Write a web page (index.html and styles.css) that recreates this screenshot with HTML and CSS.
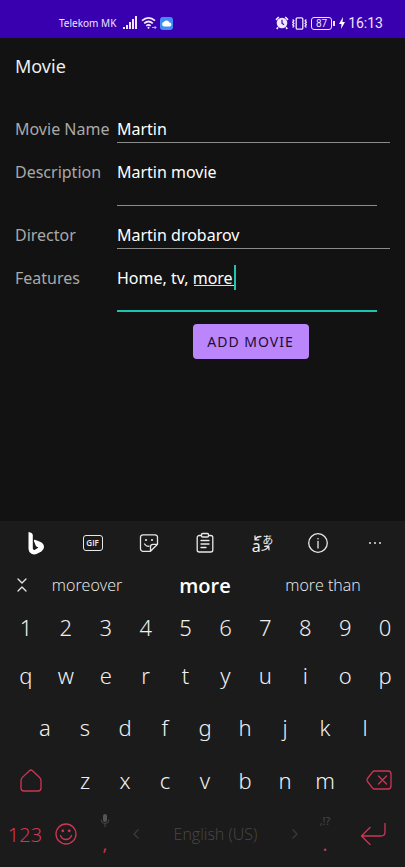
FILE: index.html
```html
<!DOCTYPE html>
<html lang="en">
<head>
<meta charset="utf-8">
<meta name="viewport" content="width=device-width, initial-scale=1">
<title>Movie</title>
<link rel="stylesheet" href="styles.css">
</head>
<body>
<div class="status">
  <div class="status-group">
    <span class="carrier">Telekom MK</span>
    <svg class="signal" width="14" height="14" viewBox="0 0 14 14" fill="#eee4ff"><path d="M0 11h2v2H0zM3 9h2v4H3zM6 6h2v7H6zM9 3h2v10H9zM12 0h2v13h-2z"/></svg>
    <svg width="16" height="14" viewBox="0 0 16 14" fill="none" stroke="#f2eaff" stroke-width="1.7"><path d="M1 4.6Q7.500-1 14 4.600M3.200 7.300Q7.500 3.700 11.800 7.300M5.300 9.800Q7.500 8 9.700 9.800"/><circle cx="7.500" cy="11.800" r="1" fill="#f2eaff" stroke="none"/><path d="M11 11.500h4M13.600 10l1.500 1.500-1.500 1.500" stroke-width="1" opacity=".7"/></svg>
    <svg width="13" height="13" viewBox="0 0 13 13"><rect width="13" height="13" rx="3" fill="#438cf5"/><path d="M4 9.500a2.300 2.300 0 0 1-.2-4.500 3 3 0 0 1 5.500.5 2 2 0 0 1 .2 4z" fill="#fff"/></svg>
  </div>
  <div class="status-group">
    <svg width="14" height="14" viewBox="0 0 14 14"><circle cx="7" cy="7" r="5.300" fill="#f2eaff"/><path d="M1 3.800 3.800 1M10.200 1 13 3.800M3 11.300l-1.200 1.600M11 11.300l1.200 1.600" stroke="#f2eaff" stroke-width="1.700"/><path d="M7 3.800V7.300l2 1.500" fill="none" stroke="#3900b0" stroke-width="1.200"/></svg>
    <svg width="15" height="13" viewBox="0 0 15 13" fill="none" stroke="#eee4ff" stroke-width="1.300"><rect x="4.200" y=".8" width="6.600" height="11.400" rx="1.200"/><path d="M.6 2.500l1.300 1.300L.6 5.200l1.300 1.300L.6 7.800l1.300 1.300L.6 10.500M14.400 2.500l-1.300 1.300 1.300 1.400-1.300 1.300 1.300 1.300-1.300 1.300 1.300 1.400"/></svg>
    <span class="battery">87</span>
    <svg class="bolt" width="6" height="12" viewBox="0 0 6 12" fill="#fff"><path d="M4 0 0 7h2.500L2 12l4-7H3.500z"/></svg>
    <span class="clock">16:13</span>
  </div>
</div>

<main>
  <h1>Movie</h1>
  <form class="form">
    <label for="name">Movie Name</label>
    <input class="field" id="name" type="text" value="Martin">
    <label for="description">Description</label>
    <textarea class="field multi" id="description">Martin movie</textarea>
    <label for="director">Director</label>
    <input class="field" id="director" type="text" value="Martin drobarov">
    <label for="features">Features</label>
    <div class="active-field">
      <textarea class="field multi focused" id="features">Home, tv, more</textarea>
      <span class="composing"></span>
    </div>
    <button class="submit" type="button">ADD MOVIE</button>
  </form>
</main>

<section class="keyboard" aria-label="Keyboard">
  <div class="tools">
    <button type="button" aria-label="Bing"><svg width="18" height="24" viewBox="0 0 18 24"><path d="M1.500 1Q5.500 1.500 5.800 4v13.500q.3 2 2.200 1.300l3.500-2.300-2.500-1.300L7 10.200q-.5-1.800 1.500-1.200l4 1.600Q17 12.300 17 16q0 2.800-2.600 4.400L9.500 23Q7 24 4.500 22.800 1.500 21 1.500 18z" fill="#fff"/></svg></button>
    <button type="button" class="gif" aria-label="GIF"><span>GIF</span></button>
    <button type="button" aria-label="Stickers"><svg class="line" width="20" height="20" viewBox="0 0 20 20"><path d="M11.500 18.300H4a2.500 2.500 0 0 1-2.500-2.500V4.300A2.500 2.500 0 0 1 4 1.800h12a2.500 2.500 0 0 1 2.500 2.500v7l-7 7zM18.500 11.300H14a2.500 2.500 0 0 0-2.500 2.500v4.500M5.500 11q1.800 2.700 4.500 2.200"/><g fill="#e8e8e8" stroke="none"><circle cx="7" cy="7" r="1.100"/><circle cx="13" cy="7" r="1.100"/></g></svg></button>
    <button type="button" aria-label="Clipboard"><svg class="line" width="18" height="22" viewBox="0 0 18 22"><path d="M5.500 3.500H3.200a2 2 0 0 0-2 2V18a2 2 0 0 0 2 2h11.600a2 2 0 0 0 2-2V5.500a2 2 0 0 0-2-2h-2.300"/><rect x="5.500" y="1.500" width="7" height="3.500" rx="1"/><path d="M5 8.500h8M5 12h8M5 15.500h5"/></svg></button>
    <button type="button" class="translate" aria-label="Translate"><span class="latin">a</span><span class="kana">あ</span><svg class="line" width="20" height="20" viewBox="0 0 20 20"><path d="M3.500 6.500Q4.500 3.500 9 3.500M3 3v3.800h3.800M10 17.300q4.500 0 6.300-4M12.700 13.300l4-.3.300 3.800"/></svg></button>
    <button type="button" aria-label="Information"><svg class="line" width="20" height="20" viewBox="0 0 20 20"><circle cx="10" cy="10" r="9.300"/><path d="M10 8.500V15"/><circle cx="10" cy="5.800" r=".8" fill="#e8e8e8" stroke="none"/></svg></button>
    <button type="button" aria-label="More"><svg width="14" height="4" viewBox="0 0 14 4" fill="#e0e0e0"><circle cx="2" cy="2" r="1"/><circle cx="7" cy="2" r="1"/><circle cx="12" cy="2" r="1"/></svg></button>
  </div>
  <div class="suggestions">
    <button type="button" aria-label="Collapse"><svg class="line" width="10" height="14" viewBox="0 0 10 14"><path d="m1 1 4 4 4-4M1 13l4-4 4 4"/></svg></button>
    <button type="button">moreover</button>
    <button type="button" class="best">more</button>
    <button type="button">more than</button>
  </div>
  <div class="row digits">
    <button type="button">1</button><button type="button">2</button><button type="button">3</button><button type="button">4</button><button type="button">5</button><button type="button">6</button><button type="button">7</button><button type="button">8</button><button type="button">9</button><button type="button">0</button>
  </div>
  <div class="row">
    <button type="button">q</button><button type="button">w</button><button type="button">e</button><button type="button">r</button><button type="button">t</button><button type="button">y</button><button type="button">u</button><button type="button">i</button><button type="button">o</button><button type="button">p</button>
  </div>
  <div class="row home">
    <button type="button">a</button><button type="button">s</button><button type="button">d</button><button type="button">f</button><button type="button">g</button><button type="button">h</button><button type="button">j</button><button type="button">k</button><button type="button">l</button>
  </div>
  <div class="row lower">
    <button type="button" aria-label="Shift"><svg class="accent" width="22" height="23" viewBox="0 0 22 23"><path d="M9.500 1.700 2.400 8.400Q1 9.700 1 11.500V19a3 3 0 0 0 3 3h14a3 3 0 0 0 3-3v-7.500q0-1.800-1.400-3.100L12.500 1.700Q11 .3 9.500 1.700z"/></svg></button>
    <button type="button">z</button><button type="button">x</button><button type="button">c</button><button type="button">v</button><button type="button">b</button><button type="button">n</button><button type="button">m</button>
    <button type="button" aria-label="Backspace"><svg class="accent" width="26" height="20" viewBox="0 0 26 20"><path d="M8.500 1H22a3 3 0 0 1 3 3v12a3 3 0 0 1-3 3H8.500Q7.500 19 6.800 18.300L1.500 11.500Q.5 10 1.500 8.500L6.800 1.700Q7.500 1 8.500 1zM12.500 6l8 8M20.500 6l-8 8"/></svg></button>
  </div>
  <div class="bottom">
    <button type="button" class="mode">123</button>
    <button type="button" aria-label="Emoji"><svg class="accent" width="22" height="22" viewBox="0 0 22 22"><circle cx="11" cy="11" r="10"/><path d="M5.500 12.500q1.500 4 5.500 4t5.500-4"/><g fill="#cd3657" stroke="none"><circle cx="7.800" cy="7.800" r="1.400"/><circle cx="14.200" cy="7.800" r="1.400"/></g></svg></button>
    <button type="button" class="dual" aria-label="Comma or voice input"><svg width="10" height="13" viewBox="0 0 10 13"><rect x="3" y="0" width="4" height="8" rx="2" fill="#555"/><path d="M1 5.500q0 4 4 4t4-4M5 9.500V13" fill="none" stroke="#484848"/></svg><span>,</span></button>
    <button type="button" aria-label="Previous language"><svg class="faint" width="8" height="12" viewBox="0 0 8 12"><path d="M6.500 1.500 2 6l4.500 4.500"/></svg></button>
    <button type="button" class="space">English (US)</button>
    <button type="button" aria-label="Next language"><svg class="faint" width="8" height="12" viewBox="0 0 8 12"><path d="M1.500 1.500 6 6l-4.500 4.500"/></svg></button>
    <button type="button" class="dual"><small>,!?</small><span>.</span></button>
    <button type="button" aria-label="Enter"><svg class="accent" width="26" height="22" viewBox="0 0 26 22"><path d="M25 .5V9q0 4-4 4H1.500M10 4.500 1.500 13l8.500 8.500"/></svg></button>
  </div>
</section>
</body>
</html>
```
FILE: styles.css
```css
* { box-sizing: border-box; }

body {
  margin: 0;
  min-height: 100vh;
  display: flex;
  flex-direction: column;
  background: #121212;
  color: #fff;
  font-family: "Noto Sans", sans-serif;
}

button {
  margin: 0;
  padding: 0;
  border: 0;
  background: none;
  color: inherit;
  font: inherit;
}

svg { display: block; flex: none; }

.status {
  height: 38px;
  padding: 8px 22px 0 59px;
  display: flex;
  justify-content: space-between;
  background: #3900b0;
  color: #eee4ff;
}

.status-group { display: flex; align-items: center; gap: 3px; }
.carrier { font: 10px "Noto Sans", sans-serif; }
.signal { margin: 0 1px 0 4px; }

.battery {
  position: relative;
  width: 21px;
  height: 13px;
  margin: 0 4px 0 1px;
  border: 1px solid #eee4ff;
  border-radius: 3px;
  font: 10px/11px Roboto, sans-serif;
  text-align: center;
}

.battery::after {
  content: "";
  position: absolute;
  top: 3px;
  right: -4px;
  width: 2px;
  height: 5px;
  background: #eee4ff;
}

.clock { font: 14px Roboto, sans-serif; }

main { flex: 1; padding: 15px 15px 0; }

h1 {
  margin: 0 0 36px;
  font-size: 18px;
  font-weight: 400;
  line-height: 26px;
  color: #eee;
}

.form {
  display: grid;
  grid-template-columns: 102px 1fr;
  font-size: 16px;
  line-height: 28px;
}

.form label { color: #a9a9a9; white-space: nowrap; }

.field {
  display: block;
  width: 100%;
  height: 28px;
  margin: 0 0 15px;
  padding: 0;
  border: 0;
  border-bottom: 1px solid #8c8c8c;
  border-radius: 0;
  outline: 0;
  background: none;
  color: #fff;
  font: inherit;
  resize: none;
  overflow: hidden;
}

.multi {
  width: calc(100% - 13px);
  height: 48px;
}

.active-field { position: relative; }
.focused { margin-bottom: 12px; border-bottom: 2px solid #1bc5b0; }

.composing {
  position: absolute;
  top: 1px;
  left: 77px;
  width: 42px;
  height: 25px;
  border-right: 2px solid #1bc5b0;
}

.composing::before {
  content: "";
  position: absolute;
  left: 0;
  right: 0;
  bottom: 4px;
  height: 1px;
  background: #ddd;
}

.submit {
  grid-column: 2;
  justify-self: center;
  width: 116px;
  height: 35px;
  margin-right: 6px;
  border-radius: 4px;
  background: #bb86fc;
  color: #1d0c35;
  font-size: 14px;
  letter-spacing: 1px;
}

.keyboard {
  padding-bottom: 5px;
  background: #1b1b1b;
  color: #f0f0f0;
}

.keyboard button {
  display: flex;
  align-items: center;
  justify-content: center;
  min-width: 0;
}

.line { fill: none; stroke: #e8e8e8; stroke-width: 1.3; stroke-linejoin: round; stroke-linecap: round; }
.accent { fill: none; stroke: #cd3657; stroke-width: 1.3; stroke-linejoin: round; stroke-linecap: round; }
.faint { fill: none; stroke: #3a3a3a; stroke-width: 1.3; }

.tools {
  height: 44px;
  padding: 0 2px 0 8px;
  display: grid;
  grid-template-columns: repeat(7, 1fr);
}

.gif span {
  width: 20px;
  height: 16px;
  border: 1px solid #e8e8e8;
  border-radius: 3px;
  font: 600 8px/14px "Open Sans", sans-serif;
}

.keyboard .translate { position: relative; }
.translate span { position: absolute; }
.latin { left: 18px; bottom: 9px; font-size: 16px; line-height: 20px; }
.kana { right: 17px; top: 12px; font: 11px/12px "Noto Sans CJK JP", sans-serif; }

.suggestions {
  height: 40px;
  padding-right: 23px;
  display: grid;
  grid-template-columns: 28px repeat(3, 1fr);
  font: 300 16px "Open Sans", sans-serif;
}

.suggestions button:first-child { padding-left: 16px; }
.keyboard .best { font-size: 20px; font-weight: 600; color: #fff; }

.row {
  height: 52px;
  padding: 0 0 2px 6px;
  display: flex;
  font: 300 22px "Noto Sans", sans-serif;
}

.row button { flex: 40; }
.digits { height: 45px; }
.home { padding: 0 20px 2px 25px; }

.lower {
  padding: 0;
  display: grid;
  grid-template-columns: 65fr repeat(7, 40fr) 60fr;
}

.lower button:first-child { padding-right: 3px; }
.lower button:last-child { padding-left: 8px; }

.bottom {
  height: 56px;
  display: grid;
  grid-template-columns: 50fr 32fr 46fr 16fr 143fr 16fr 44fr 52fr 6fr;
  color: #cd3657;
}

.keyboard .mode { font-size: 20px; font-weight: 300; }
.keyboard .space { color: #484848; font-family: "Open Sans", sans-serif; font-size: 16px; font-weight: 300; }

.keyboard .dual {
  flex-direction: column;
  justify-content: space-between;
  padding: 8px 0;
  font-size: 18px;
  line-height: 20px;
}

.dual small { color: #484848; font-size: 11px; line-height: 14px; }
```
